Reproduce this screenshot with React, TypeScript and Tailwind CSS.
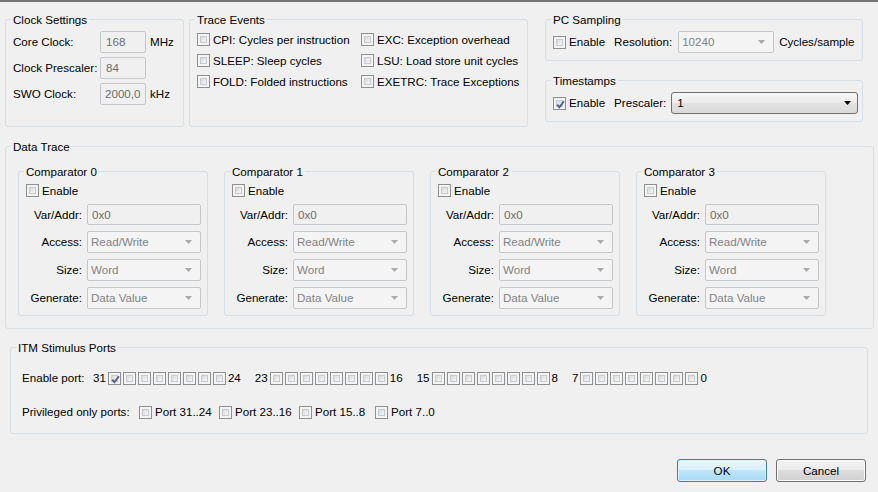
import React from "react";

function Check({ checked = false }: { checked?: boolean }) {
  return (
    <span className="relative inline-flex h-[13px] w-[13px] shrink-0 border border-[#8e8f8f] bg-[#f4f4f4] p-[2px]">
      <span className="block h-full w-full border border-[#c6c9cd] bg-linear-to-br from-[#d8dadd] to-[#f7f7f7]" />
      {checked && (
        <svg className="absolute left-[1px] top-[1px]" width="11" height="11" viewBox="0 0 11 11">
          <path d="M2.2 5.6 L4.4 8.2 L8.9 2.2" fill="none" stroke="#4c5f93" strokeWidth="1.9" />
        </svg>
      )}
    </span>
  );
}

function CheckLabel({ label, checked = false }: { label: string; checked?: boolean }) {
  return (
    <div className="flex h-[13px] items-center gap-[3px] whitespace-nowrap">
      <Check checked={checked} />
      <span>{label}</span>
    </div>
  );
}

function Group({ title, className = "", children }: { title: string; className?: string; children?: React.ReactNode }) {
  return (
    <fieldset className={`shrink-0 rounded-[3px] border border-[#d5dfe5] ${className}`}>
      <legend className="ml-[5px] px-[2px] leading-[15px]">{title}</legend>
      {children}
    </fieldset>
  );
}

function Field({ value, className = "" }: { value: string; className?: string }) {
  return (
    <div className={`flex items-center rounded-[2px] border border-[#c3c7cb] bg-[#f0f0f0] text-[#6d6d6d] ${className}`}>
      {value}
    </div>
  );
}

function Arrow({ color }: { color: string }) {
  return (
    <svg width="7" height="4" viewBox="0 0 7 4" className="shrink-0">
      <path d="M0 0 H7 L3.5 4 Z" fill={color} />
    </svg>
  );
}

function Combo({ value, className = "", enabled = false }: { value: string; className?: string; enabled?: boolean }) {
  if (enabled) {
    return (
      <div className={`flex h-[22px] items-center justify-between rounded-[3px] border border-[#707070] bg-[linear-gradient(#f6f6f6,#ececec_50%,#e2e2e2_50%,#dadada)] pl-[5px] pr-[6px] ${className}`}>
        <span>{value}</span>
        <Arrow color="#000" />
      </div>
    );
  }
  return (
    <div className={`flex h-[22px] items-center justify-between rounded-[2px] border border-[#c3c7cb] bg-[#f4f4f4] pl-[3px] pr-[8px] text-[#838383] ${className}`}>
      <span>{value}</span>
      <Arrow color="#a9a9a9" />
    </div>
  );
}

function Comparator({ n }: { n: number }) {
  return (
    <Group title={`Comparator ${n}`} className="h-[152px] w-[190px]">
      <div className="pl-[7px] pt-[5px]">
        <CheckLabel label="Enable" />
        <div className="mt-[7px] grid grid-cols-[56px_114px] items-center gap-x-[5px] gap-y-[6px] whitespace-nowrap">
          <span className="text-right">Var/Addr:</span>
          <Field value="0x0" className="h-[21px] pl-[4px]" />
          <span className="text-right">Access:</span>
          <Combo value="Read/Write" />
          <span className="text-right">Size:</span>
          <Combo value="Word" />
          <span className="text-right">Generate:</span>
          <Combo value="Data Value" />
        </div>
      </div>
    </Group>
  );
}

function PortGroup({ hi, lo, first = false }: { hi: number; lo: number; first?: boolean }) {
  return (
    <div className="flex items-center gap-[2px]">
      <span>{hi}</span>
      {Array.from({ length: 8 }).map((_, i) => (
        <Check key={i} checked={first && i === 0} />
      ))}
      <span>{lo}</span>
    </div>
  );
}

export default function App() {
  return (
    <div className="h-[492px] w-[878px] overflow-hidden border-t-2 border-[#737373] bg-[#f0f0f0] font-['Liberation_Sans',Arial,sans-serif] text-[11.6px] text-black">
      {/* top row */}
      <div className="mt-[10px] flex pl-[5px]">
        <Group title="Clock Settings" className="h-[115px] w-[179px]">
          <div className="grid grid-cols-[87px_46px_auto] items-center gap-y-[4px] whitespace-nowrap pl-[7px] pt-[4px]">
            <span>Core Clock:</span>
            <Field value="168" className="h-[22px] pl-[5px]" />
            <span className="pl-[4px]">MHz</span>
            <span>Clock Prescaler:</span>
            <Field value="84" className="h-[22px] pl-[5px]" />
            <span />
            <span>SWO Clock:</span>
            <Field value="2000,0" className="h-[22px] pl-[4px]" />
            <span className="pl-[4px]">kHz</span>
          </div>
        </Group>

        <Group title="Trace Events" className="ml-[5px] h-[115px] w-[339px]">
          <div className="grid grid-cols-[164px_auto] gap-y-[8px] pl-[7px] pt-[6px]">
            <CheckLabel label="CPI: Cycles per instruction" />
            <CheckLabel label="EXC: Exception overhead" />
            <CheckLabel label="SLEEP: Sleep cycles" />
            <CheckLabel label="LSU: Load store unit cycles" />
            <CheckLabel label="FOLD: Folded instructions" />
            <CheckLabel label="EXETRC: Trace Exceptions" />
          </div>
        </Group>

        <div className="ml-[17px] flex flex-col">
          <Group title="PC Sampling" className="h-[49px] w-[318px]">
            <div className="flex items-center whitespace-nowrap pl-[7px] pt-[4px]">
              <CheckLabel label="Enable" />
              <span className="ml-[9px]">Resolution:</span>
              <Combo value="10240" className="ml-[6px] w-[96px]" />
              <span className="ml-[5px]">Cycles/sample</span>
            </div>
          </Group>
          <Group title="Timestamps" className="mt-[12px] h-[49px] w-[318px]">
            <div className="flex items-center whitespace-nowrap pl-[7px] pt-[4px]">
              <CheckLabel label="Enable" checked />
              <span className="ml-[9px]">Prescaler:</span>
              <Combo value="1" enabled className="ml-[5px] w-[187px]" />
            </div>
          </Group>
        </div>
      </div>

      {/* data trace */}
      <Group title="Data Trace" className="ml-[5px] mt-[12px] h-[190px] w-[869px]">
        <div className="flex gap-[16px] pl-[12px] pt-[10px]">
          {[0, 1, 2, 3].map((n) => (
            <Comparator key={n} n={n} />
          ))}
        </div>
      </Group>

      {/* ITM ports */}
      <Group title="ITM Stimulus Ports" className="ml-[10px] mt-[11px] h-[94px] w-[858px]">
        <div className="whitespace-nowrap pl-[11px] pt-[15px]">
          <div className="flex h-[16px] items-center">
            <span className="w-[71px]">Enable port:</span>
            <div className="flex items-center gap-[14px]">
              <PortGroup hi={31} lo={24} first />
              <PortGroup hi={23} lo={16} />
              <PortGroup hi={15} lo={8} />
              <PortGroup hi={7} lo={0} />
            </div>
          </div>
          <div className="mt-[18px] flex h-[16px] items-center">
            <span className="w-[117px]">Privileged only ports:</span>
            <div className="w-[80px]"><CheckLabel label="Port 31..24" /></div>
            <div className="w-[80px]"><CheckLabel label="Port 23..16" /></div>
            <div className="w-[76px]"><CheckLabel label="Port 15..8" /></div>
            <CheckLabel label="Port 7..0" />
          </div>
        </div>
      </Group>

      {/* buttons */}
      <div className="mt-[25px] flex justify-end gap-[9px] pr-[12px]">
        <button className="h-[23px] w-[90px] rounded-[3px] border border-[#3c7fb1] bg-[linear-gradient(#eaf6fd,#d9f0fc_50%,#bee6fd_50%,#a7d9f5)] shadow-[inset_0_0_0_1px_#dff2fc]">
          OK
        </button>
        <button className="h-[23px] w-[90px] rounded-[3px] border border-[#707070] bg-[linear-gradient(#f2f2f2,#ebebeb_50%,#dddddd_50%,#cfcfcf)] shadow-[inset_0_0_0_1px_#fcfcfc]">
          Cancel
        </button>
      </div>
    </div>
  );
}
